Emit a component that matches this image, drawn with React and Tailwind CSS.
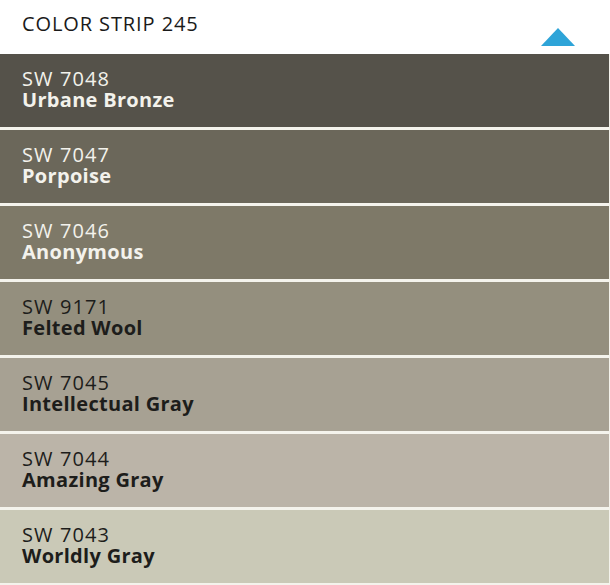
import React from 'react';

const swatches = [
  { code: 'SW 7048', name: 'Urbane Bronze', bg: 'bg-[#55524a]', text: 'text-[#f3f2ec]' },
  { code: 'SW 7047', name: 'Porpoise', bg: 'bg-[#6b675a]', text: 'text-[#f3f2ec]' },
  { code: 'SW 7046', name: 'Anonymous', bg: 'bg-[#7e7968]', text: 'text-[#f3f2ec]' },
  { code: 'SW 9171', name: 'Felted Wool', bg: 'bg-[#948f7e]', text: 'text-[#1d1d1b]' },
  { code: 'SW 7045', name: 'Intellectual Gray', bg: 'bg-[#a7a193]', text: 'text-[#1d1d1b]' },
  { code: 'SW 7044', name: 'Amazing Gray', bg: 'bg-[#bbb4a8]', text: 'text-[#1d1d1b]' },
  { code: 'SW 7043', name: 'Worldly Gray', bg: 'bg-[#cac9b7]', text: 'text-[#1d1d1b]' },
];

const Swatch = ({ code, name, bg, text }) => (
  <div className={`h-[73px] ${bg} ${text} pl-[22px] pt-[14px]`}>
    <div className="text-[20px] leading-[21px] tracking-[1.1px]">{code}</div>
    <div className="text-[20px] leading-[21px] font-bold tracking-[0.3px]">{name}</div>
  </div>
);

export default function App() {
  return (
    <div className="w-[610px] h-[585px] bg-white overflow-hidden font-['Open_Sans',sans-serif]">
      <div className="h-[54px] flex items-start justify-between pl-[22px] pr-[35px]">
        <span className="mt-[12px] text-[20px] leading-[24px] text-[#1a1a1a] tracking-[0.9px]">COLOR STRIP 245</span>
        <svg className="mt-[28px]" width="34" height="18" viewBox="0 0 34 18">
          <polygon points="0,18 17,0 34,18" fill="#2ea4d8" />
        </svg>
      </div>
      <div className="flex flex-col gap-[3px] bg-[#f4f3ec] pr-[1px] pb-[2px]">
        {swatches.map((s) => (
          <Swatch key={s.code} {...s} />
        ))}
      </div>
    </div>
  );
}
